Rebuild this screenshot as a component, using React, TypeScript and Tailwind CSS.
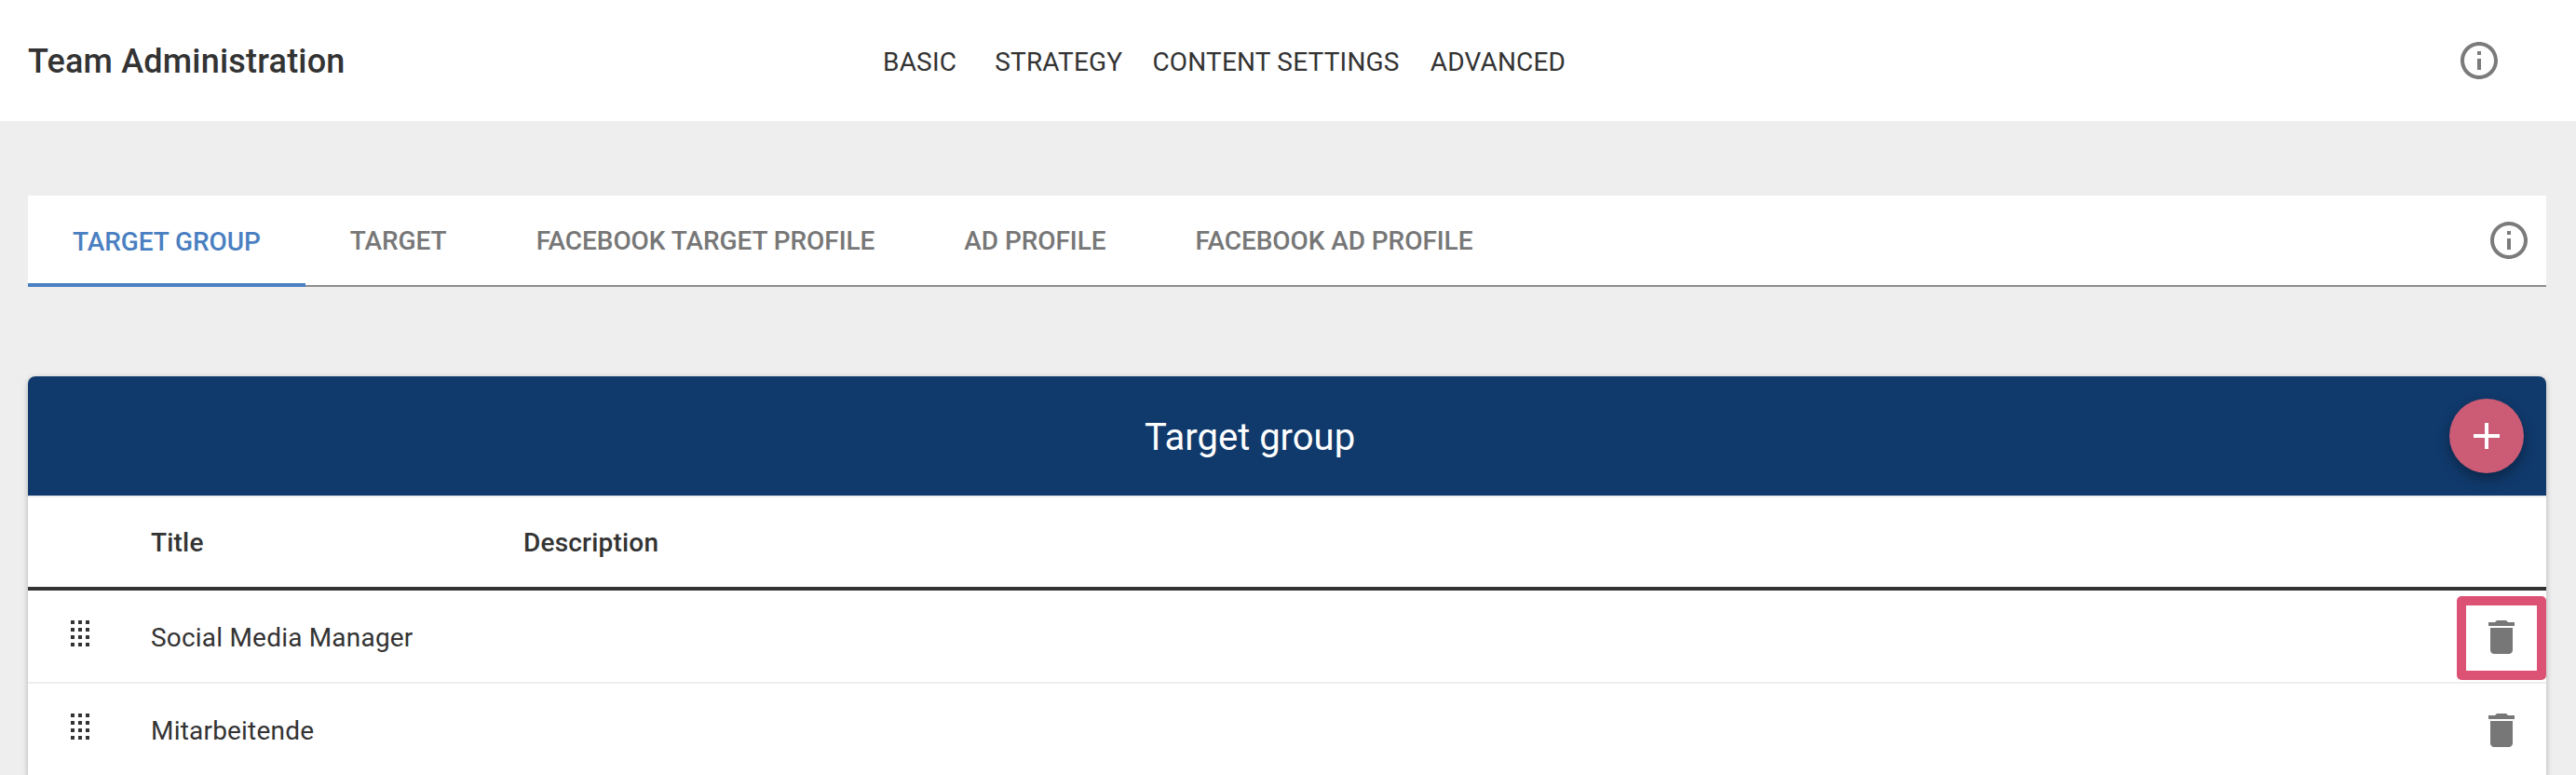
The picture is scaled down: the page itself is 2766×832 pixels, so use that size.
const INFO = "M11 7h2v2h-2zm0 4h2v6h-2zm1-9C6.48 2 2 6.48 2 12s4.48 10 10 10 10-4.48 10-10S17.52 2 12 2zm0 18c-4.41 0-8-3.59-8-8s3.59-8 8-8 8 3.59 8 8-3.59 8-8 8z";
const TRASH = "M6 19c0 1.1.9 2 2 2h8c1.1 0 2-.9 2-2V7H6v12zM19 4h-3.5l-1-1h-5l-1 1H5v2h14V4z";

function InfoIcon() {
  return (
    <svg viewBox="0 0 24 24" className="w-12 h-12 fill-[#7b7b7b] shrink-0">
      <path d={INFO} />
    </svg>
  );
}

function TrashIcon() {
  return (
    <svg viewBox="0 0 24 24" className="w-12 h-12 fill-[#777777]">
      <path d={TRASH} />
    </svg>
  );
}

function DragDots() {
  return (
    <div className="grid grid-cols-[4px_4px_4px] grid-rows-[4px_4px_4px_4px] gap-1 w-5">
      {Array.from({ length: 12 }).map((_, i) => (
        <span key={i} className="bg-[#333333]" />
      ))}
    </div>
  );
}

function Row({ title, highlight }: { title: string; highlight?: boolean }) {
  return (
    <div className="relative flex items-center h-[100px] border-b-2 border-[#eeeeee]">
      <div className="w-[132px] pl-[46px] pb-[6px]">
        <DragDots />
      </div>
      <span className="pt-1 text-[28px] tracking-[0.2px] text-[#333333]">{title}</span>
      <div className="ml-auto mr-6 mt-[2px]">
        <TrashIcon />
      </div>
      {highlight && (
        <div className="absolute right-0 top-[6px] w-[96px] h-[90px] border-[10px] border-[#dc5274] rounded-[5px]" />
      )}
    </div>
  );
}

export default function App() {
  return (
    <div className="h-[832px] overflow-hidden bg-[#eeeeee] font-['Roboto',sans-serif]">
      <header className="flex items-center h-[130px] bg-white pl-[30px] pr-[80px]">
        <h1 className="w-[918px] pt-[2px] text-[36px] tracking-[0.2px] font-medium text-[#333333]">Team Administration</h1>
        <nav className="flex pt-1 text-[28px] tracking-[0.2px] text-[#333333]">
          <span className="mr-[41px]">BASIC</span>
          <span className="mr-8">STRATEGY</span>
          <span className="mr-[33px]">CONTENT SETTINGS</span>
          <span>ADVANCED</span>
        </nav>
        <div className="ml-auto">
          <InfoIcon />
        </div>
      </header>

      <div className="flex items-center h-[98px] mt-20 ml-[30px] mr-8 bg-white border-b-2 border-[#8e8e8e] pr-4">
        <div className="flex h-full text-[28px] tracking-[-0.07px] font-medium text-[#777777]">
          <div className="flex items-center px-12 pt-[6px] -mb-[2px] text-[#4a7fc1] border-b-4 border-[#4a7fc1]">TARGET GROUP</div>
          <div className="flex items-center px-12 pt-[2px]">TARGET</div>
          <div className="flex items-center px-12 pt-[2px]">FACEBOOK TARGET PROFILE</div>
          <div className="flex items-center px-12 pt-[2px]">AD PROFILE</div>
          <div className="flex items-center px-12 pt-[2px]">FACEBOOK AD PROFILE</div>
        </div>
        <div className="ml-auto">
          <InfoIcon />
        </div>
      </div>

      <section className="mt-24 ml-[30px] mr-8 bg-white rounded-t-lg shadow-[0_2px_6px_rgba(0,0,0,0.25)]">
        <div className="relative flex items-center justify-center h-[130px] pr-20 pt-1 bg-[#103a6c] rounded-t-lg border-b-2 border-[#eeeeee]">
          <span className="text-[40px] text-white">Target group</span>
          <button className="absolute right-6 top-6 flex items-center justify-center w-20 h-20 rounded-full bg-[#cc5b75] shadow-[0_6px_14px_rgba(0,0,0,0.35)]">
            <svg viewBox="0 0 28 28" className="w-7 h-7 stroke-white stroke-[4]">
              <path d="M14 0v28M0 14h28" />
            </svg>
          </button>
        </div>
        <div className="flex items-center h-[100px] pt-[2px] border-b-4 border-[#333333] text-[28px] tracking-[0.2px] font-medium text-[#333333]">
          <span className="ml-[132px] w-[400px]">Title</span>
          <span>Description</span>
        </div>
        <Row title="Social Media Manager" highlight />
        <Row title="Mitarbeitende" />
      </section>
    </div>
  );
}
